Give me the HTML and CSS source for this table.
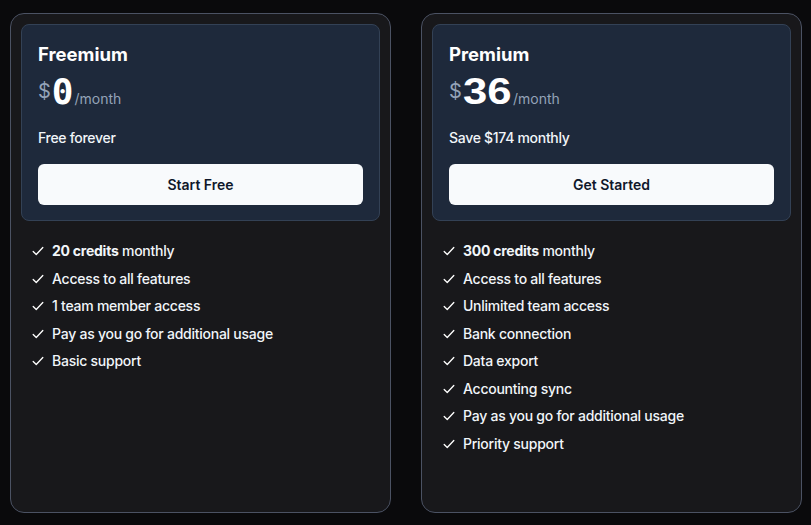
FILE: index.html
```html
<!DOCTYPE html>
<html>
<head>
<meta charset="utf-8">
<link rel="stylesheet" href="styles.css">
</head>
<body>
<div class="plans">
  <div class="card">
    <div class="panel">
      <h2 class="title">Freemium</h2>
      <div class="price"><span class="cur">$</span><span class="amt">0</span><span class="per">/month</span></div>
      <p class="note">Free forever</p>
      <button class="btn">Start Free</button>
    </div>
    <ul class="features">
      <li><svg class="chk" viewBox="0 0 16 16"><path d="M2.5 8.5l3.5 3.5 7.5-8"/></svg><span><b>20 credits</b> monthly</span></li>
      <li><svg class="chk" viewBox="0 0 16 16"><path d="M2.5 8.5l3.5 3.5 7.5-8"/></svg><span>Access to all features</span></li>
      <li><svg class="chk" viewBox="0 0 16 16"><path d="M2.5 8.5l3.5 3.5 7.5-8"/></svg><span>1 team member access</span></li>
      <li><svg class="chk" viewBox="0 0 16 16"><path d="M2.5 8.5l3.5 3.5 7.5-8"/></svg><span>Pay as you go for additional usage</span></li>
      <li><svg class="chk" viewBox="0 0 16 16"><path d="M2.5 8.5l3.5 3.5 7.5-8"/></svg><span>Basic support</span></li>
    </ul>
  </div>
  <div class="card">
    <div class="panel">
      <h2 class="title">Premium</h2>
      <div class="price"><span class="cur">$</span><span class="amt wide">36</span><span class="per">/month</span></div>
      <p class="note">Save $174 monthly</p>
      <button class="btn">Get Started</button>
    </div>
    <ul class="features">
      <li><svg class="chk" viewBox="0 0 16 16"><path d="M2.5 8.5l3.5 3.5 7.5-8"/></svg><span><b>300 credits</b> monthly</span></li>
      <li><svg class="chk" viewBox="0 0 16 16"><path d="M2.5 8.5l3.5 3.5 7.5-8"/></svg><span>Access to all features</span></li>
      <li><svg class="chk" viewBox="0 0 16 16"><path d="M2.5 8.5l3.5 3.5 7.5-8"/></svg><span>Unlimited team access</span></li>
      <li><svg class="chk" viewBox="0 0 16 16"><path d="M2.5 8.5l3.5 3.5 7.5-8"/></svg><span>Bank connection</span></li>
      <li><svg class="chk" viewBox="0 0 16 16"><path d="M2.5 8.5l3.5 3.5 7.5-8"/></svg><span>Data export</span></li>
      <li><svg class="chk" viewBox="0 0 16 16"><path d="M2.5 8.5l3.5 3.5 7.5-8"/></svg><span>Accounting sync</span></li>
      <li><svg class="chk" viewBox="0 0 16 16"><path d="M2.5 8.5l3.5 3.5 7.5-8"/></svg><span>Pay as you go for additional usage</span></li>
      <li><svg class="chk" viewBox="0 0 16 16"><path d="M2.5 8.5l3.5 3.5 7.5-8"/></svg><span>Priority support</span></li>
    </ul>
  </div>
</div>
</body>
</html>
```
FILE: styles.css
```css
html, body {
  margin: 0;
  padding: 0;
  background: #0a0a0c;
  font-family: Inter, "Noto Sans", sans-serif;
  color: #f1f5f9;
}
.plans {
  display: flex;
  gap: 30px;
  padding: 13px 0 0 10px;
}
.card {
  box-sizing: border-box;
  width: 381px;
  height: 500px;
  background: #18181b;
  border: 1px solid #4b5263;
  border-radius: 14px;
  padding: 10px;
}
.panel {
  background: #1e293b;
  border: 1px solid #334155;
  border-radius: 8px;
  padding: 17px 16px 15px 16px;
}
.title {
  margin: 0;
  font-size: 18.5px;
  line-height: 24px;
  font-weight: 700;
  color: #ffffff;
}
.price {
  display: flex;
  align-items: baseline;
  margin-top: 6px;
  height: 40px;
}
.cur {
  font-size: 20px;
  color: #94a3b8;
  align-self: flex-start;
  margin-top: 7px;
  margin-right: 1px;
}
.amt {
  font-family: "DejaVu Sans Mono", monospace;
  font-weight: 700;
  font-size: 36px;
  line-height: 40px;
  color: #ffffff;
}
.amt.wide {
  display: inline-block;
  font-family: "Liberation Sans", Arial, sans-serif;
  font-size: 37px;
  transform: scaleX(1.18);
  transform-origin: left;
  margin-right: 8px;
}
.per {
  font-size: 14px;
  color: #94a3b8;
  margin-left: 1px;
}
.note {
  margin: 16px 0 0 0;
  font-size: 14px;
  line-height: 20px;
  font-weight: 500;
  letter-spacing: -0.3px;
  color: #f1f5f9;
}
.btn {
  display: block;
  width: 100%;
  height: 41px;
  margin-top: 16px;
  background: #f8fafc;
  border: none;
  border-radius: 6px;
  font-family: Inter, "Noto Sans", sans-serif;
  font-size: 14px;
  font-weight: 600;
  color: #0f172a;
}
.features {
  list-style: none;
  margin: 20px 0 0 0;
  padding: 0 0 0 10px;
  display: flex;
  flex-direction: column;
  gap: 7.5px;
}
.features li {
  display: flex;
  align-items: center;
  gap: 7px;
  font-size: 14px;
  line-height: 20px;
  font-weight: 500;
  letter-spacing: -0.25px;
}
.features b {
  font-weight: 700;
}
.chk {
  width: 14px;
  height: 14px;
  fill: none;
  stroke: #ffffff;
  stroke-width: 1.5;
  stroke-linecap: round;
  stroke-linejoin: round;
}
```
